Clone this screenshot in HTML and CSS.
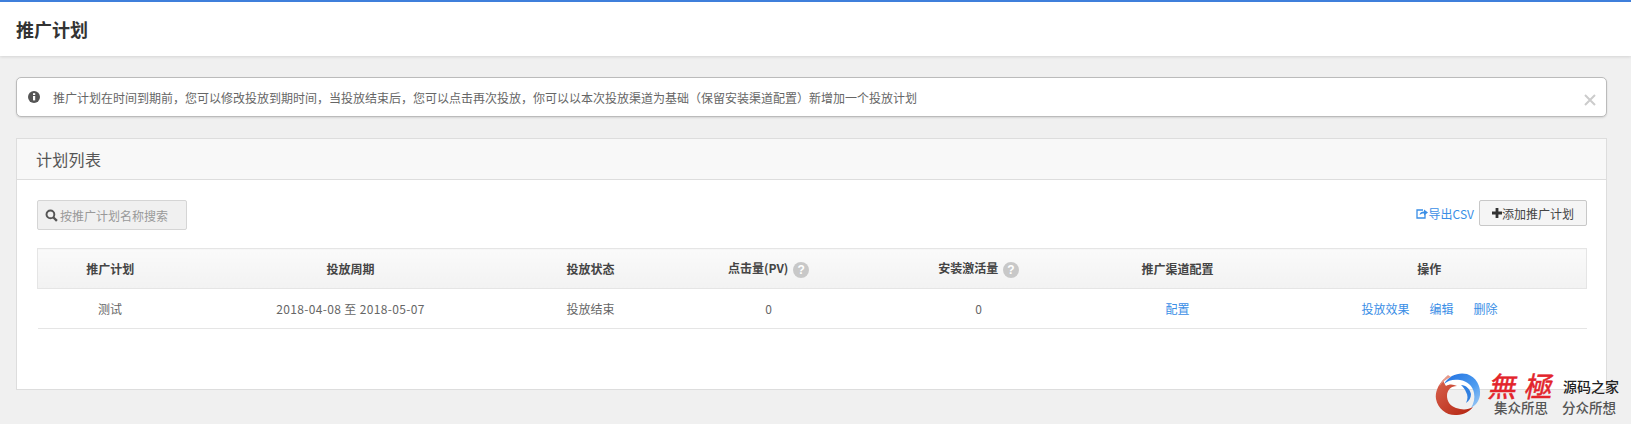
FILE: index.html
```html
<!DOCTYPE html>
<html lang="zh-CN">
<head>
  <meta charset="UTF-8">
  <title>推广计划</title>
  <link rel="stylesheet" href="styles.css">
</head>
<body>

<header class="page-header">
  <h1>推广计划</h1>
</header>

<main class="content">
  <div class="alert">
    <svg class="alert-icon" viewBox="0 0 12 12"><circle cx="6" cy="6" r="6" fill="#555"/><rect x="5" y="5" width="2.2" height="4.4" fill="#fff"/><rect x="5" y="2.2" width="2.2" height="1.8" fill="#fff"/></svg>
    <span class="alert-text">推广计划在时间到期前，您可以修改投放到期时间，当投放结束后，您可以点击再次投放，你可以以本次投放渠道为基础（保留安装渠道配置）新增加一个投放计划</span>
    <svg class="alert-close" viewBox="0 0 12 12"><path d="M1 1 11 11M11 1 1 11" stroke="#ccc" stroke-width="2" fill="none"/></svg>
  </div>

  <section class="panel">
    <div class="panel-title">计划列表</div>
    <div class="panel-body">
      <div class="toolbar">
        <div class="search">
          <svg class="search-icon" viewBox="0 0 12 12"><circle cx="5" cy="5" r="3.6" fill="none" stroke="#555" stroke-width="1.8"/><path d="M7.6 7.6 11 11" stroke="#555" stroke-width="2.2"/></svg>
          <span>按推广计划名称搜索</span>
        </div>
        <div class="actions">
          <a class="export" href="#">
            <svg class="export-icon" viewBox="0 0 12 11"><path d="M7 2H1v8h8V6" fill="none" stroke="#3a8ee6" stroke-width="1.3"/><path d="M3.5 7C4 4.5 5.5 3.6 8 3.6V1.5L12 4.5 8 7.4V5.4C6 5.3 4.6 5.8 3.5 7Z" fill="#3a8ee6"/></svg>导出CSV</a>
          <button class="add-btn"><svg class="plus-icon" viewBox="0 0 10 10"><path d="M3.6 0h2.8v3.6H10v2.8H6.4V10H3.6V6.4H0V3.6h3.6Z" fill="#333"/></svg>添加推广计划</button>
        </div>
      </div>

      <table class="plan-table">
        <thead>
          <tr>
            <th class="col-name">推广计划</th>
            <th class="col-period">投放周期</th>
            <th class="col-status">投放状态</th>
            <th class="col-clicks">点击量(PV) <span class="help">?</span></th>
            <th class="col-installs">安装激活量 <span class="help">?</span></th>
            <th class="col-channel">推广渠道配置</th>
            <th class="col-ops">操作</th>
          </tr>
        </thead>
        <tbody>
          <tr>
            <td>测试</td>
            <td class="date-range">2018-04-08 至 2018-05-07</td>
            <td>投放结束</td>
            <td>0</td>
            <td>0</td>
            <td><a href="#">配置</a></td>
            <td class="col-ops"><a href="#">投放效果</a><a href="#">编辑</a><a href="#">删除</a></td>
          </tr>
        </tbody>
      </table>
    </div>
  </section>
</main>

<!-- marca de agua encima de la pagina -->
<div class="watermark">
  <svg class="wm-logo" viewBox="0 0 46 44">
    <defs>
      <linearGradient id="wmBlue" x1="0" y1="0" x2="1" y2="1"><stop offset="0" stop-color="#1f6fe0"/><stop offset="0.6" stop-color="#4d9cf0"/><stop offset="1" stop-color="#a5cdf5"/></linearGradient>
      <linearGradient id="wmRed" x1="0" y1="0" x2="1" y2="1"><stop offset="0" stop-color="#d9634f"/><stop offset="1" stop-color="#b3230f"/></linearGradient>
    </defs>
    <path d="M9 12C14 3 24 0 32 2 41 5 46 14 45 23 44 29 41 33 36 36 39 31 40 26 39 21 38 14 32 9 25 8 19 7 13 8 9 12Z" fill="url(#wmBlue)"/>
    <path d="M26 13C31 13 35 17 36 22 36 26 34 29 31 31 33 27 33 23 31 20 30 17 28 15 26 13Z" fill="#2f7fe0"/>
    <path d="M9 7C3 13 0 20 1 27 3 37 12 44 22 43 29 43 35 39 38 35 33 38 27 38 21 36 15 34 12 29 12 24 12 18 16 14 22 14 18 12 14 12 11 14 9 11 8 9 9 7Z" fill="url(#wmRed)"/>
    <path d="M13 3C9 6 6 10 4 15 7 10 11 7 16 5Z" fill="#e59a8c"/>
  </svg>
  <div class="wm-text">
    <div class="wm-top"><span class="wm-brand">無極</span><span class="wm-site">源码之家</span></div>
    <div class="wm-slogan"><span>集众所思</span><span>分众所想</span></div>
  </div>
</div>

</body>
</html>
```

FILE: styles.css
```css
body {
  margin: 0;
  background-color: #f0f0f0;
  font-family: "Noto Sans CJK SC", "Liberation Sans", sans-serif;
  font-size: 12px;
  color: #666;
  height: 424px;
  overflow: hidden;
  position: relative;
}

a {
  color: #3a8ee6;
  text-decoration: none;
}

.page-header {
  height: 54px;
  background-color: #fff;
  border-top: 2px solid #3f7fdb;
  box-shadow: 0 1px 3px rgba(0, 0, 0, 0.12);
  padding: 0 16px;
  display: flex;
  align-items: center;
}

.page-header h1 {
  margin: 0;
  font-size: 18px;
  font-weight: 700;
  color: #333;
}

.content {
  padding: 21px 24px 0 16px;
}

/* Aviso */
.alert {
  height: 38px;
  background-color: #fff;
  border: 1px solid #bbb;
  border-radius: 5px;
  box-shadow: 0 1px 2px rgba(0, 0, 0, 0.12);
  display: flex;
  align-items: center;
  padding: 0 10px 0 11px;
}

.alert-icon {
  width: 12px;
  height: 12px;
  flex: none;
  margin-right: 13px;
}

.alert-text {
  flex: 1;
  color: #666;
}

.alert-close {
  width: 12px;
  height: 12px;
  margin-top: 6px;
  flex: none;
}

/* Panel */
.panel {
  margin-top: 21px;
  height: 250px;
  background-color: #fff;
  border: 1px solid #ddd;
}

.panel-title {
  height: 40px;
  line-height: 40px;
  background-color: #f8f8f8;
  border-bottom: 1px solid #ddd;
  padding-left: 19px;
  font-size: 16px;
  letter-spacing: 0.3px;
  color: #555;
}

.panel-body {
  padding: 20px 19px 0 20px;
}

.toolbar {
  display: flex;
  justify-content: space-between;
  height: 48px;
}

.search {
  width: 150px;
  height: 30px;
  box-sizing: border-box;
  background-color: #f0f0f0;
  border: 1px solid #d5d5d5;
  border-radius: 2px;
  display: flex;
  align-items: center;
  padding-left: 7px;
  color: #999;
}

.search-icon {
  width: 13px;
  height: 13px;
  margin-right: 2px;
}

.actions {
  display: flex;
  align-items: flex-start;
  gap: 5px;
}

.export {
  height: 26px;
  display: flex;
  align-items: center;
}

.export-icon {
  width: 12px;
  height: 11px;
  margin-right: 1px;
}

.add-btn {
  width: 108px;
  height: 26px;
  padding: 0;
  background-color: #f5f5f5;
  border: 1px solid #c8c8c8;
  border-radius: 2px;
  font-family: inherit;
  font-size: 12px;
  color: #444;
  display: flex;
  align-items: center;
  justify-content: center;
}

.plus-icon {
  width: 10px;
  height: 10px;
}

/* Tabla */
.plan-table {
  width: 1550px;
  border-collapse: collapse;
  table-layout: fixed;
}

.plan-table th,
.plan-table td {
  box-sizing: border-box;
  height: 40px;
  padding: 0 4px 0 0;
  text-align: center;
}

.plan-table th {
  background: linear-gradient(#fafafa, #f2f2f2);
  border-top: 1px solid #e5e5e5;
  border-bottom: 1px solid #e5e5e5;
  color: #444;
  font-weight: 700;
}

.plan-table th:first-child {
  border-left: 1px solid #e5e5e5;
}

.plan-table th:last-child {
  border-right: 1px solid #e5e5e5;
}

.plan-table td {
  border-bottom: 1px solid #e5e5e5;
}

.col-name { width: 149px; }
.col-period { width: 332px; }
.col-status { width: 148px; }
.col-clicks { width: 208px; }
.col-installs { width: 212px; }
.col-channel { width: 186px; }

.plan-table .col-ops {
  padding-right: 0;
}

.col-ops a + a {
  margin-left: 20px;
}

.plan-table .date-range {
  letter-spacing: 0.35px;
}

.help {
  display: inline-block;
  width: 16px;
  height: 16px;
  line-height: 16px;
  border-radius: 50%;
  background-color: #c8c8c8;
  color: #fff;
  font-size: 12px;
  font-family: "Liberation Sans", sans-serif;
  vertical-align: middle;
  margin-left: 2px;
}

/* Marca de agua */
.watermark {
  position: absolute;
  left: 1435px;
  top: 372px;
  display: flex;
  gap: 7px;
}

.wm-logo {
  width: 46px;
  height: 44px;
  flex: none;
}

.wm-top {
  display: flex;
  align-items: center;
  height: 27px;
}

.wm-brand {
  width: 73px;
  margin-left: 2px;
  font-size: 28px;
  line-height: 27px;
  font-weight: 400;
  font-family: "Noto Sans CJK JP", sans-serif;
  color: #e3242b;
  letter-spacing: 8px;
  -webkit-text-stroke: 0.5px #e3242b;
  transform: skewX(-12deg);
  white-space: nowrap;
}

.wm-site {
  font-size: 14px;
  font-weight: 500;
  color: #222;
  white-space: nowrap;
}

.wm-slogan {
  display: flex;
  gap: 14px;
  padding-left: 6px;
  font-size: 13.5px;
  line-height: 17px;
  font-weight: 500;
  color: #555;
  white-space: nowrap;
}
```
